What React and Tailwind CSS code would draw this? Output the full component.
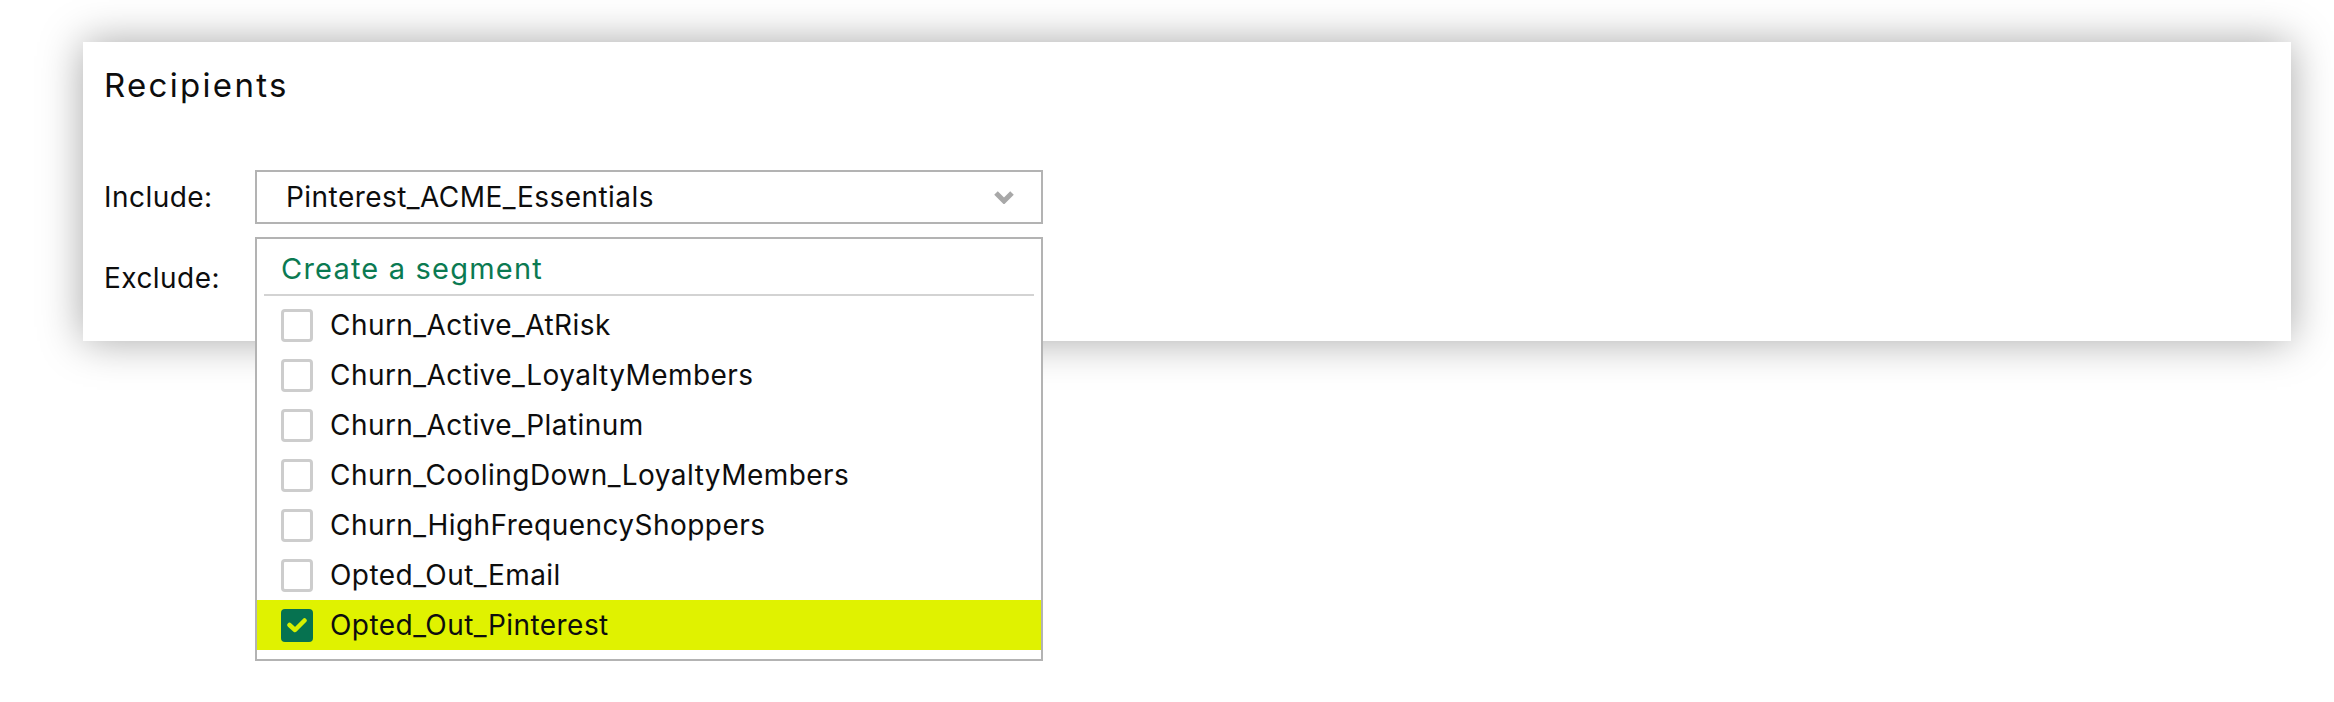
import { useState } from "react";

const SEGMENTS = [
  "Churn_Active_AtRisk",
  "Churn_Active_LoyaltyMembers",
  "Churn_Active_Platinum",
  "Churn_CoolingDown_LoyaltyMembers",
  "Churn_HighFrequencyShoppers",
  "Opted_Out_Email",
  "Opted_Out_Pinterest",
];

function ChevronDown() {
  return (
    <svg width="22" height="14" viewBox="0 0 22 14" className="shrink-0">
      <path
        d="M3 3 L11 11 L19 3"
        fill="none"
        stroke="#a8a8a8"
        strokeWidth="5"
        strokeLinejoin="miter"
      />
    </svg>
  );
}

function Checkbox({ checked }) {
  if (checked) {
    return (
      <span className="flex items-center justify-center w-[32px] h-[33px] rounded-[4px] bg-[#067250] shrink-0">
        <svg width="22" height="16" viewBox="0 0 22 16">
          <path
            d="M3.5 8 L9 13 L18.5 3.5"
            fill="none"
            stroke="#d6f000"
            strokeWidth="4.5"
            strokeLinecap="round"
            strokeLinejoin="round"
          />
        </svg>
      </span>
    );
  }
  return (
    <span className="block w-[32px] h-[33px] rounded-[4px] border-[3px] border-[#cdcdcd] bg-white shrink-0" />
  );
}

export default function App() {
  const [selected, setSelected] = useState(["Opted_Out_Pinterest"]);

  const toggle = (name) =>
    setSelected((prev) =>
      prev.includes(name) ? prev.filter((n) => n !== name) : [...prev, name],
    );

  return (
    <div
      className="min-h-[702px] bg-white pt-[42px] pl-[83px]"
      style={{ fontFamily: "Inter, 'Open Sans', sans-serif" }}
    >
      <div className="relative w-[2208px] h-[299px] bg-white shadow-[0_0_40px_rgba(0,0,0,0.35)]">
        <h2 className="pl-[21px] pt-[23px] text-[33px] leading-[40px] tracking-[2.3px] text-[#0d0d0d] font-normal">
          Recipients
        </h2>

        <div className="flex flex-col gap-[27px] pl-[21px] pt-[65px] text-[28px] tracking-[0.45px] text-[#0d0d0d]">
          <div className="flex items-center h-[54px]">
            <span className="w-[151px]">Include:</span>
            <div className="flex items-center justify-between w-[788px] h-[54px] border-2 border-[#b3b3b3] pl-[29px] pr-[26px]">
              <span>Pinterest_ACME_Essentials</span>
              <ChevronDown />
            </div>
          </div>
          <div className="flex items-center h-[54px]">
            <span className="w-[151px]">Exclude:</span>
            <div className="w-[788px] h-[54px] border-2 border-[#b3b3b3]" />
          </div>
        </div>

        <div className="absolute left-[172px] top-[195px] z-10 w-[788px] h-[424px] bg-white border-2 border-[#b3b3b3]">
          <div className="h-[55px] flex items-center pl-[24px] pt-[5px]">
            <span className="text-[29px] tracking-[1.2px] text-[#0b7a52]">
              Create a segment
            </span>
          </div>
          <div className="mx-[7px] h-[2px] bg-[#d3d3d3]" />
          <ul className="pt-[4px]">
            {SEGMENTS.map((name) => {
              const checked = selected.includes(name);
              return (
                <li
                  key={name}
                  onClick={() => toggle(name)}
                  className={`flex items-center gap-[17px] h-[50px] pl-[24px] cursor-pointer ${
                    checked ? "bg-[#e0f200]" : "bg-white"
                  }`}
                >
                  <Checkbox checked={checked} />
                  <span className="text-[28px] tracking-[0.45px] text-[#0d0d0d]">
                    {name}
                  </span>
                </li>
              );
            })}
          </ul>
        </div>
      </div>
    </div>
  );
}
